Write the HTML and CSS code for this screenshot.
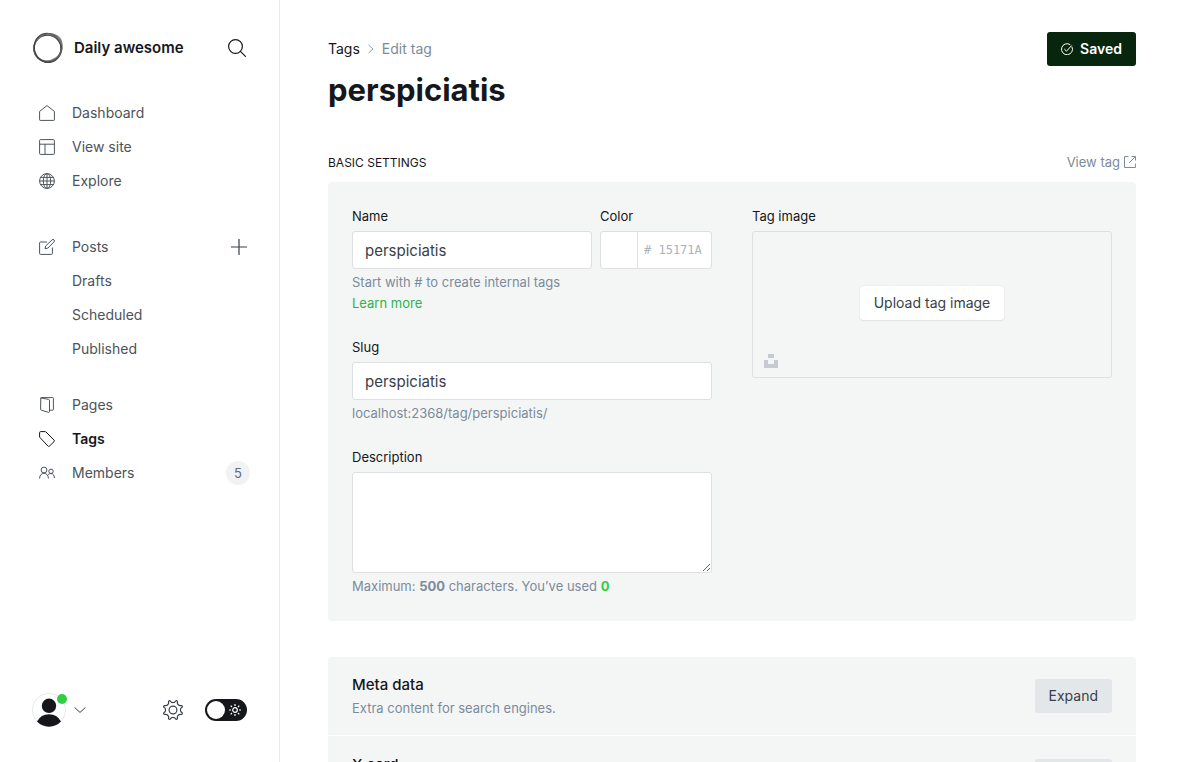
FILE: index.html
```html
<!DOCTYPE html>
<html lang="en">
<head>
<meta charset="utf-8">
<title>Edit tag - Daily awesome</title>
<link rel="stylesheet" href="styles.css">
</head>
<body>
<div class="app">
  <aside class="sidebar">
    <header class="site">
      <svg class="site-logo" viewBox="0 0 32 32" width="32" height="32" fill="none">
        <ellipse cx="15.500" cy="16.500" rx="13.600" ry="13.400" stroke="#333" stroke-width="1.500"/>
        <ellipse cx="16.500" cy="15.500" rx="14.400" ry="13.200" stroke="#777" stroke-width="1.300" transform="rotate(-35 16 16)"/>
        <ellipse cx="15.800" cy="16.200" rx="14.600" ry="13.400" stroke="#444" stroke-width="1.300" transform="rotate(70 16 16)"/>
        <path d="M15 1.200c7-.6 13 2.200 15 7.500l-.8 5C27 7 22 3.500 12 3z" fill="#777" fill-opacity=".6"/>
        <path d="M30.500 15c.5 8-5 14-13 15.500 7-3 11-9 11.500-15z" fill="#666" fill-opacity=".6"/>
      </svg>
      <span class="site-name">Daily awesome</span>
      <button class="icon-button" aria-label="Search">
        <svg viewBox="0 0 18 18" width="18" height="18" fill="none" stroke="#15171a" stroke-width="1.200" stroke-linecap="round"><circle cx="7.500" cy="7.500" r="6.900"/><path d="M12.400 12.400l5 5"/></svg>
      </button>
    </header>
    <nav class="nav">
      <ul class="nav-group">
        <li><a href="#" class="nav-item"><svg viewBox="0 0 16 16"><path d="M.6 6.400 8 .6l7.400 5.800v8.400a.6.6 0 0 1-.6.600H1.200a.6.6 0 0 1-.6-.600z"/></svg>Dashboard</a></li>
        <li><a href="#" class="nav-item"><svg viewBox="0 0 16 16"><rect x=".6" y=".6" width="14.800" height="14.800" rx="1"/><path d="M.6 5.200h14.800M6 5.200v10.200"/></svg>View site</a></li>
        <li><a href="#" class="nav-item"><svg viewBox="0 0 16 16"><circle cx="8" cy="8" r="7.400"/><ellipse cx="8" cy="8" rx="3.700" ry="7.400"/><path d="M8 .6v14.800M.6 8h14.800M1.600 4.400h12.800M1.600 11.600h12.800"/></svg>Explore</a></li>
      </ul>
      <ul class="nav-group posts">
        <li class="nav-row"><a href="#" class="nav-item"><svg viewBox="0 0 16 16"><path d="M8 3H1.600a1 1 0 0 0-1 1v10.400a1 1 0 0 0 1 1h10.800a1 1 0 0 0 1-1V8.500M6 9.800l.7-2.900L13 .9a1.400 1.400 0 0 1 2 2L8.800 9.100z"/></svg>Posts</a>
          <button class="icon-button add" aria-label="New post"><svg viewBox="0 0 16 16" width="16" height="16" fill="none" stroke="#394047" stroke-width="1.200"><path d="M8 0v16M0 8h16"/></svg></button></li>
        <li><a href="#" class="nav-item sub">Drafts</a></li>
        <li><a href="#" class="nav-item sub">Scheduled</a></li>
        <li><a href="#" class="nav-item sub">Published</a></li>
      </ul>
      <ul class="nav-group">
        <li><a href="#" class="nav-item"><svg viewBox="0 0 16 16"><path d="M1.600 1.300c0-.4.300-.7.700-.7h11.400c.4 0 .7.300.7.700v11.200c0 .4-.3.700-.7.700h-3.200M1.800.9l7.800 1.500c.5.100.9.500.9 1v11.200c0 .5-.4.900-.9.700l-7.200-2.100a1 1 0 0 1-.8-1z"/></svg>Pages</a></li>
        <li><a href="#" class="nav-item active"><svg viewBox="0 0 16 16"><path d="M.6 1.600v4.500L8.800 15a1.200 1.200 0 0 0 1.700 0l4.500-4.300a1.200 1.200 0 0 0 0-1.700L7 1A1.200 1.200 0 0 0 6.200.6H1.600a1 1 0 0 0-1 1z"/></svg>Tags</a></li>
        <li class="nav-row"><a href="#" class="nav-item"><svg viewBox="0 0 16 16"><circle cx="5" cy="5" r="2.900"/><circle cx="12" cy="6.300" r="2.200"/><path d="M.6 13.500C.6 10.300 2.500 8.300 5 8.300s4.400 2 4.400 5.200M9.200 9.700c.8-.8 1.700-1.200 2.800-1.200 2 0 3.400 1.800 3.400 4.500"/></svg>Members</a><span class="count">5</span></li>
      </ul>
    </nav>
    <footer class="account">
      <button class="user" aria-label="Account menu">
        <span class="avatar">
          <svg viewBox="0 0 34 34" width="34" height="34"><circle cx="17" cy="17" r="16.500" fill="#fff" stroke="#e6e8eb"/><circle cx="17" cy="12.800" r="7.200" fill="#15171a"/><path d="M5 28.500a13.500 13.500 0 0 1 24 0 16.500 16.500 0 0 1-24 0z" fill="#15171a"/></svg>
          <span class="online"></span>
        </span>
        <svg viewBox="0 0 12 6" width="12" height="6" fill="none" stroke="#394047"><path d="M.5.400 6 5.400 11.500.4"/></svg>
      </button>
      <button class="icon-button settings" aria-label="Settings">
        <svg viewBox="0 0 20 20" width="20" height="20" fill="none" stroke="#394047" stroke-width="1.200" stroke-linejoin="round"><circle cx="10" cy="10" r="3.900"/><path d="M19.110 12.700A1.200 1.200 0 0 1 18.350 14.530A3 3 0 0 0 14.530 18.350A1.200 1.200 0 0 1 12.700 19.110A3 3 0 0 0 7.300 19.110A1.200 1.200 0 0 1 5.470 18.350A3 3 0 0 0 1.650 14.530A1.200 1.200 0 0 1 .89 12.700A3 3 0 0 0 .89 7.300A1.200 1.200 0 0 1 1.650 5.470A3 3 0 0 0 5.470 1.650A1.200 1.200 0 0 1 7.300 .89A3 3 0 0 0 12.700 .89A1.200 1.200 0 0 1 14.530 1.650A3 3 0 0 0 18.350 5.470A1.200 1.200 0 0 1 19.110 7.300A3 3 0 0 0 19.110 12.700z"/></svg>
      </button>
      <label class="theme">
        <input type="checkbox" class="theme-input" aria-label="Dark mode">
        <span class="knob"></span>
        <svg viewBox="0 0 12 12" width="12" height="12" fill="none" stroke="#fff" stroke-width="1.200"><circle cx="6" cy="6" r="2.300"/><path d="M6 0v2M6 10v2M0 6h2M10 6h2M1.700 1.700l1.300 1.300M9 9l1.300 1.300M1.700 10.300 3 9M9 3l1.300-1.300"/></svg>
      </label>
    </footer>
  </aside>

  <main class="main">
    <header class="page-header">
      <div>
        <div class="crumbs">
          <a href="#" class="crumb">Tags</a>
          <svg viewBox="0 0 6 10" width="6" height="10" fill="none" stroke="#8e9cac"><path d="M.5 1 5 5 .5 9"/></svg>
          <span>Edit tag</span>
        </div>
        <h1 class="title">perspiciatis</h1>
      </div>
      <button class="button saved">
        <svg viewBox="0 0 12 12" width="12" height="12" fill="none" stroke="#fff"><path d="M10.900 3.700a5.500 5.500 0 1 1-1.600-1.900M3.300 6l2.200 2.200 5.200-5.700"/></svg>
        Saved
      </button>
    </header>

    <div class="section-head">
      <h2 class="section-title">Basic settings</h2>
      <a href="#" class="view-tag">View tag
        <svg viewBox="0 0 12 12" width="12" height="12" fill="none" stroke="currentColor"><path d="M4.500.6h-4v10.900h10.900v-4M5 7 11.300.7M7.500.5h4v4"/></svg></a>
    </div>
    <section class="panel basic">
      <div class="fields">
        <div class="name-row">
          <div class="group">
            <label class="label" for="name">Name</label>
            <input class="input" id="name" type="text" value="perspiciatis">
            <p class="hint">Start with # to create internal tags<br><a href="#" class="learn">Learn more</a></p>
          </div>
          <div class="group">
            <label class="label" for="color">Color</label>
            <div class="color-box">
              <span class="swatch"></span>
              <input class="color-input" id="color" type="text" placeholder="# 15171A">
            </div>
          </div>
        </div>
        <div class="group">
          <label class="label" for="slug">Slug</label>
          <input class="input" id="slug" type="text" value="perspiciatis">
          <p class="hint">localhost:2368/tag/perspiciatis/</p>
        </div>
        <div class="group">
          <label class="label" for="description">Description</label>
          <textarea class="input area" id="description"></textarea>
          <p class="hint">Maximum: <b>500</b> characters. You’ve used <b class="used">0</b></p>
        </div>
      </div>
      <div class="group">
        <span class="label">Tag image</span>
        <div class="uploader">
          <button class="button upload">Upload tag image</button>
          <button class="unsplash" aria-label="Unsplash"><svg viewBox="0 0 14 14" width="14" height="14" fill="#c5cbd0"><path d="M4 0h6v4H4zM0 6h4v4h6V6h4v8H0z"/></svg></button>
        </div>
      </div>
    </section>

    <section class="panel">
      <div class="expandable">
        <div>
          <h3 class="expand-title">Meta data</h3>
          <p class="expand-text">Extra content for search engines.</p>
        </div>
        <button class="button expand">Expand</button>
      </div>
      <div class="expandable">
        <div>
          <h3 class="expand-title">X card</h3>
        </div>
        <button class="button expand" aria-label="Expand X card"></button>
      </div>
    </section>
  </main>
</div>
</body>
</html>
```

FILE: styles.css
```css
* { box-sizing: border-box; }
body {
  margin: 0;
  font-family: Inter, "Liberation Sans", sans-serif;
  font-size: 14px;
  line-height: 20px;
  color: #15171a;
  background: #fff;
}
h1, h2, h3, p, ul { margin: 0; padding: 0; }
ul { list-style: none; }
a { color: inherit; text-decoration: none; }
button, input, textarea { font: inherit; color: inherit; }
button { border: 0; padding: 0; background: none; cursor: pointer; }
svg { display: block; flex: none; }

.app { display: flex; height: 100vh; overflow: hidden; }

.sidebar {
  display: flex;
  flex-direction: column;
  flex: none;
  width: 280px;
  padding: 32px 32px 35px;
  border-right: 1px solid #e6e8ea;
}
.site { display: flex; align-items: center; height: 32px; }
.site-name { flex: 1; margin-left: 10px; font-size: 15px; font-weight: 600; }
.icon-button { display: flex; margin-right: 1px; }
.nav { flex: 1; margin-top: 32px; }
.nav-group { margin-bottom: 32px; }
.nav-group.posts { margin-bottom: 22px; }
.nav-row { display: flex; align-items: center; justify-content: space-between; }
.nav-item {
  display: flex;
  align-items: center;
  gap: 17px;
  height: 34px;
  padding-left: 7px;
  font-size: 14px;
  color: #4c535b;
}
.nav-item svg { width: 16px; height: 16px; fill: none; stroke: currentColor; stroke-width: 1; stroke-linejoin: round; }
.nav-item.sub { padding-left: 40px; }
.nav-item.active { font-weight: 600; color: #15171a; }
.icon-button.add { margin-right: 0; }
.count {
  width: 24px;
  height: 24px;
  border-radius: 50%;
  background: #f0f2f4;
  color: #5d6b7a;
  font-size: 13px;
  line-height: 24px;
  text-align: center;
}
.nav-row .count { margin-right: -3px; }

.account { display: flex; align-items: center; }
.user { display: flex; align-items: center; gap: 8px; }
.avatar { position: relative; }
.online {
  position: absolute;
  top: 1px;
  right: -1px;
  width: 10px;
  height: 10px;
  border-radius: 50%;
  background: #30cf43;
}
.settings { margin: 0 22px 0 auto; }
.theme {
  position: relative;
  display: flex;
  align-items: center;
  justify-content: space-between;
  width: 42px;
  height: 22px;
  padding: 0 6px 0 2px;
  border-radius: 11px;
  background: #15171a;
}
.theme-input { position: absolute; inset: 0; width: 100%; height: 100%; margin: 0; opacity: 0; }
.knob { width: 18px; height: 18px; border-radius: 50%; background: #fff; }

.main { flex: 1; min-width: 0; padding: 32px 48px 0; overflow: hidden; }
.page-header { display: flex; align-items: flex-start; justify-content: space-between; }
.crumbs { display: flex; align-items: center; gap: 8px; height: 34px; color: #7c8b9a; }
.crumb { color: #15171a; }
.title { font-size: 31px; line-height: 40px; font-weight: 700; margin-top: 4px; }
.button {
  display: flex;
  align-items: center;
  height: 34px;
  padding: 0 14px;
  border-radius: 3px;
  font-size: 14px;
  color: #394047;
}
.button.saved { gap: 7px; background: #08260e; color: #fff; font-weight: 600; }
.section-head {
  display: flex;
  align-items: center;
  justify-content: space-between;
  height: 20px;
  margin: 42px 0 10px;
}
.section-title { padding-top: 2px; font-size: 12px; font-weight: 400; text-transform: uppercase; }
.view-tag { display: flex; align-items: center; gap: 4px; font-size: 13px; color: #7c8b9a; }

.panel { margin-bottom: 36px; border-radius: 4px; background: #f4f6f6; }
.basic {
  display: grid;
  grid-template-columns: 1fr 1fr;
  gap: 40px;
  padding: 24px;
}
.fields { display: flex; flex-direction: column; gap: 23px; }
.name-row { display: grid; grid-template-columns: 1fr 112px; gap: 8px; }
.label { display: block; margin-bottom: 5px; font-size: 13px; }
.input {
  display: block;
  width: 100%;
  height: 38px;
  padding: 0 12px;
  border: 1px solid #dddfe0;
  border-radius: 3px;
  background: #fff;
  font-size: 15px;
  color: #394047;
}
.area { height: 101px; padding: 8px 12px; resize: vertical; }
.hint { margin-top: 3px; font-size: 13px; line-height: 21px; color: #7c8b9a; }
.learn { color: #30b24a; }
.used { color: #30cf43; }
.color-box {
  display: flex;
  height: 38px;
  border: 1px solid #dddfe0;
  border-radius: 3px;
  background: #fff;
}
.swatch { flex: none; width: 37px; border-right: 1px solid #dddfe0; }
.color-input {
  flex: 1;
  min-width: 0;
  padding: 0 6px;
  border: 0;
  background: none;
  font-family: "DejaVu Sans Mono", monospace;
  font-size: 12px;
}
.color-input::placeholder { color: #abb4be; }
.uploader {
  position: relative;
  display: flex;
  align-items: center;
  justify-content: center;
  height: 147px;
  padding-bottom: 4px;
  border: 1px solid #dddfe0;
  border-radius: 3px;
}
.upload { background: #fff; box-shadow: 0 0 1px rgba(0, 0, 0, .2), 0 1px 2px rgba(0, 0, 0, .06); }
.unsplash { position: absolute; left: 11px; bottom: 9px; }

.expandable { display: flex; justify-content: space-between; padding: 22px 24px; }
.expandable + .expandable { border-top: 1px solid #fff; padding-top: 23px; }
.expandable > div { margin-top: -5px; }
.expand-title { font-size: 15px; line-height: 22px; font-weight: 500; }
.expand-text { margin-bottom: -8px; padding-top: 2px; font-size: 13px; line-height: 21px; color: #7c8b9a; }
.button.expand { min-width: 77px; background: #e3e7ea; }
```
